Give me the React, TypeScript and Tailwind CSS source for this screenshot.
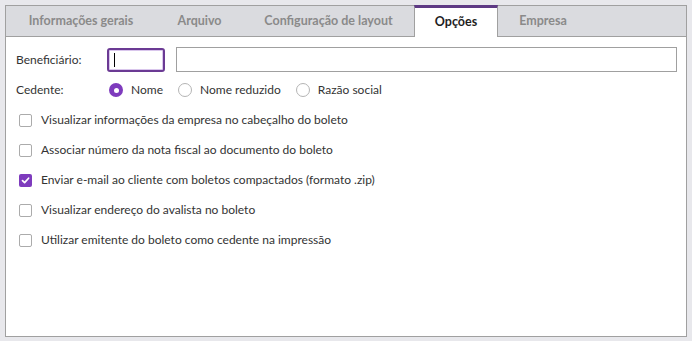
const tabs = [
  { label: "Informações gerais", w: "w-[150px]" },
  { label: "Arquivo", w: "w-[87px]" },
  { label: "Configuração de layout", w: "w-[171px]" },
  { label: "Opções", w: "w-[84px]", active: true },
  { label: "Empresa", w: "w-[90px]" },
];

const options = [
  { label: "Visualizar informações da empresa no cabeçalho do boleto", checked: false },
  { label: "Associar número da nota fiscal ao documento do boleto", checked: false },
  { label: "Enviar e-mail ao cliente com boletos compactados (formato .zip)", checked: true },
  { label: "Visualizar endereço do avalista no boleto", checked: false },
  { label: "Utilizar emitente do boleto como cedente na impressão", checked: false },
];

const Radio = ({ label, checked }: { label: string; checked?: boolean }) => (
  <label className="flex items-center gap-[8px]">
    {checked ? (
      <span className="w-[14px] h-[14px] rounded-full bg-[#7e3bbd] flex items-center justify-center">
        <span className="w-[5px] h-[5px] rounded-full bg-white" />
      </span>
    ) : (
      <span className="w-[14px] h-[14px] rounded-full border border-[#b4b4b4] bg-white" />
    )}
    <span>{label}</span>
  </label>
);

const Checkbox = ({ label, checked }: { label: string; checked: boolean }) => (
  <div className="flex items-center gap-[9px] h-[30px]">
    {checked ? (
      <span className="w-[13px] h-[13px] rounded-[2px] bg-[#7e3bbd] flex items-center justify-center">
        <svg width="9" height="9" viewBox="0 0 9 9" fill="none">
          <path d="M1.5 4.6 L3.6 6.6 L7.6 2.2" stroke="white" strokeWidth="1.7" strokeLinecap="round" strokeLinejoin="round" />
        </svg>
      </span>
    ) : (
      <span className="w-[13px] h-[13px] rounded-[2px] border border-[#ababab] bg-white" />
    )}
    <span>{label}</span>
  </div>
);

export default function App() {
  return (
    <div
      className="w-[692px] h-[341px] bg-[#e8e8ec] pt-[5px] px-[5px] pb-[4px] text-[12px] text-[#333]"
      style={{ fontFamily: 'Lato, "Noto Sans", sans-serif' }}
    >
      <div className="h-full border border-[#a0a0a0] bg-white flex flex-col">
        <div className="flex h-[31px] bg-[#dadbdf] border-b border-[#a0a0a0] shrink-0 text-[12.5px]">
          {tabs.map((t) =>
            t.active ? (
              <div
                key={t.label}
                className={`${t.w} relative -mt-px -mb-px flex items-center justify-center bg-white border-x border-[#a0a0a0] border-t-[3px] border-t-[#5e3a84] font-bold text-[#1e1e1e]`}
              >
                {t.label}
              </div>
            ) : (
              <div key={t.label} className={`${t.w} flex items-center justify-center font-bold text-[#8a8a8a]`}>
                {t.label}
              </div>
            )
          )}
        </div>

        <div className="pl-[10px] pr-[9px] pt-[10px]">
          <div className="flex items-center">
            <span className="w-[91px]">Beneficiário:</span>
            <div className="w-[58px] h-[24px] rounded-[3px] border-2 border-[#6b3a94] ring-1 ring-inset ring-[#d9c6ec] flex items-center pl-[5px]">
              <span className="w-px h-[14px] bg-black" />
            </div>
            <div className="flex-1 ml-[11px] h-[25px] border border-[#a0a0a0]" />
          </div>

          <div className="flex items-center mt-[5px] h-[26px]">
            <span className="w-[93px]">Cedente:</span>
            <div className="flex items-center gap-[15px]">
              <Radio label="Nome" checked />
              <Radio label="Nome reduzido" />
              <Radio label="Razão social" />
            </div>
          </div>

          <div className="mt-[2px] pl-[3px]">
            {options.map((o) => (
              <Checkbox key={o.label} label={o.label} checked={o.checked} />
            ))}
          </div>
        </div>
      </div>
    </div>
  );
}
